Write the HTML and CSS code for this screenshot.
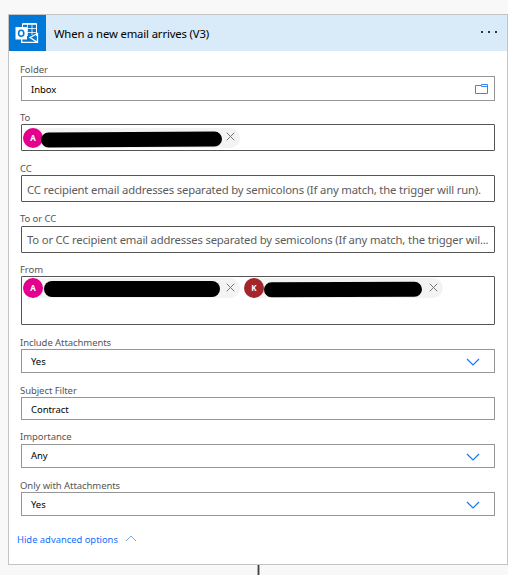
FILE: index.html
```html
<!DOCTYPE html>
<html lang="en">
<head>
<meta charset="utf-8">
<title>When a new email arrives (V3)</title>
<link rel="stylesheet" href="styles.css">
</head>
<body>
<main class="card">
  <header class="card-header">
    <div class="app-icon">
      <svg width="37" height="36" viewBox="0 0 37 36" fill="none" stroke="#fff">
        <path d="M13.5 13V8.5H27.5V21" stroke-width="1"/>
        <path d="M13.5 9.5H27.5M18.5 9V21M23 9V20M14 13.5H28M18 17.5H28" stroke-width=".8"/>
        <path d="M12.7 24V27.3H28.5V18.5L21 22.5L28 27" stroke-width="1.3"/>
        <path d="M6.5 12H18V24.5H6.5Z" fill="#fff" stroke="none"/>
        <ellipse cx="12.2" cy="18.3" rx="2.6" ry="3" stroke="#0078d7" stroke-width="1.6"/>
      </svg>
    </div>
    <h1 class="title">When a new email arrives (V3)</h1>
    <div class="more"><i></i><i></i><i></i></div>
  </header>

  <form class="fields">
    <div class="field folder">
      <label>Folder</label>
      <div class="box"><span class="value">Inbox</span>
        <svg class="folder-icon" width="15" height="12" viewBox="0 0 15 12" fill="none" stroke="#3b86f7"><path d="M1.5 2.5H7.5V1.5H13.5V10.5H1.5ZM7.5 2.5V3.5H13.5"/></svg>
      </div>
    </div>
    <div class="field to">
      <label>To</label>
      <div class="box people">
        <div class="pill"><b class="avatar">A</b><span class="redacted first"></span><svg class="close" width="9" height="9" viewBox="0 0 9 9"><path d="M.7 .7L8.3 8.3M8.3 .7L.7 8.3"/></svg></div>
      </div>
    </div>
    <div class="field cc">
      <label>CC</label>
      <div class="box people"><span class="placeholder">CC recipient email addresses separated by semicolons (If any match, the trigger will run).</span></div>
    </div>
    <div class="field tocc">
      <label>To or CC</label>
      <div class="box people"><span class="placeholder">To or CC recipient email addresses separated by semicolons (If any match, the trigger wil...</span></div>
    </div>
    <div class="field from">
      <label>From</label>
      <div class="box people">
        <div class="pill"><b class="avatar">A</b><span class="redacted second"></span><svg class="close" width="9" height="9" viewBox="0 0 9 9"><path d="M.7 .7L8.3 8.3M8.3 .7L.7 8.3"/></svg></div>
        <div class="pill narrow"><b class="avatar red">K</b><span class="redacted third"></span><svg class="close" width="9" height="9" viewBox="0 0 9 9"><path d="M.7 .7L8.3 8.3M8.3 .7L.7 8.3"/></svg></div>
      </div>
    </div>
    <div class="field include">
      <label>Include Attachments</label>
      <div class="box"><span class="value">Yes</span><svg class="chevron" width="14" height="8" viewBox="0 0 14 8"><path d="M1 1L7 7L13 1"/></svg></div>
    </div>
    <div class="field subject">
      <label>Subject Filter</label>
      <div class="box"><span class="value">Contract</span></div>
    </div>
    <div class="field importance">
      <label>Importance</label>
      <div class="box"><span class="value">Any</span><svg class="chevron" width="14" height="8" viewBox="0 0 14 8"><path d="M1 1L7 7L13 1"/></svg></div>
    </div>
    <div class="field only">
      <label>Only with Attachments</label>
      <div class="box"><span class="value">Yes</span><svg class="chevron" width="14" height="8" viewBox="0 0 14 8"><path d="M1 1L7 7L13 1"/></svg></div>
    </div>
  </form>
  <div class="advanced"><span>Hide advanced options</span><svg width="12" height="7" viewBox="0 0 12 7"><path d="M1 6L6 1L11 6"/></svg></div>
</main>
<div class="connector"></div>
</body>
</html>
```
FILE: styles.css
```css
* { box-sizing: border-box; }

body {
  margin: 0;
  height: 575px;
  padding: 14px 0 0 8px;
  overflow: hidden;
  background: #f8f8f8;
  font-family: "Noto Sans", "Open Sans", sans-serif;
}

svg { display: block; flex: none; }

.card {
  width: 500px;
  height: 551px;
  border: 1px solid #c4c4c4;
  background: #fff;
}

.card-header {
  display: flex;
  height: 36px;
  background: #d9eaf8;
}

.app-icon { width: 37px; background: #0078d7; }

.title {
  flex: 1;
  margin: 0 0 0 8px;
  font-size: 11.3px;
  line-height: 38px;
  font-weight: 400;
  letter-spacing: -0.14px;
  white-space: nowrap;
}

.more { display: flex; gap: 5px; padding: 16px 10px 0 0; }
.more i { width: 2px; height: 2px; background: #333; }

.fields { padding: 10px 12px 0 11px; }

.field { display: flex; flex-direction: column; justify-content: flex-end; }
.field label {
  height: 14px;
  line-height: 16px;
  font-size: 9.5px;
  letter-spacing: -0.07px;
  color: #555;
  white-space: nowrap;
}

.box {
  display: flex;
  align-items: center;
  margin-left: 1px;
  width: 474px;
  height: 24px;
  border: 1px solid #969696;
  padding: 0 14px 0 9px;
}

.folder { height: 40px; }
.folder .box { height: 25px; padding-right: 5px; }
.to { height: 50px; }
.cc { height: 51px; }
.tocc { height: 51px; }
.from { height: 72px; }
.include { height: 48px; }
.subject { height: 47px; }
.importance { height: 48px; }
.only { height: 48px; }
.subject .box { height: 23px; }
.tocc label, .importance label { height: 15px; }

.value { flex: 1; padding-top: 2px; font-size: 9.5px; line-height: 14px; letter-spacing: -0.05px; color: #000; }
.importance .value { padding-top: 0; }

.people { height: 27px; border-color: #555; border-radius: 1px; padding: 1px; align-items: flex-start; gap: 4px; }
.from .people { height: 49px; }

.placeholder {
  padding-left: 4px;
  font-size: 11.3px;
  line-height: 26px;
  letter-spacing: -0.18px;
  color: #5c5c5c;
  white-space: nowrap;
}
.cc .placeholder { line-height: 28px; }
.people:has(.placeholder) { padding: 0 1px; }

.pill { display: flex; width: 217px; height: 20px; border-radius: 10px; background: #f3f3f3; margin-top: 2px; }
.from .pill { margin-top: 0; }
.pill.narrow { width: 199px; }
.avatar {
  flex: none;
  width: 20px;
  height: 20px;
  border-radius: 50%;
  background: #e3008c;
  color: #fff;
  font-size: 8px;
  line-height: 20px;
  text-align: center;
}
.avatar.red { background: #a4262c; }
.redacted { height: 15px; border-radius: 8px; background: #000; flex: none; }
.first { width: 181px; margin: 4px 4px 0 -2px; transform: rotate(-.3deg); }
.second { width: 176px; margin: 3px 6px 0 1px; height: 16px; }
.third { width: 158px; margin: 4px 7px 0 0; transform: rotate(-.2deg); }
.close { margin-top: 5px; fill: none; stroke: #777; stroke-width: 1; }
.to .close { margin-top: 4px; }

.chevron { margin-top: 1px; fill: none; stroke: #1677ff; stroke-width: 1.2; }

.advanced {
  display: flex;
  align-items: center;
  gap: 7px;
  margin: 16px 0 0 8px;
  height: 15px;
  font-size: 9.4px;
  line-height: 15px;
  color: #0f6fff;
}
.advanced svg { fill: none; stroke: #7fa8e8; stroke-width: 1; margin-top: -3px; }

.connector { width: 3px; height: 10px; margin-left: 249px; background: #444; border: solid #aaa; border-width: 0 1px; }
```
